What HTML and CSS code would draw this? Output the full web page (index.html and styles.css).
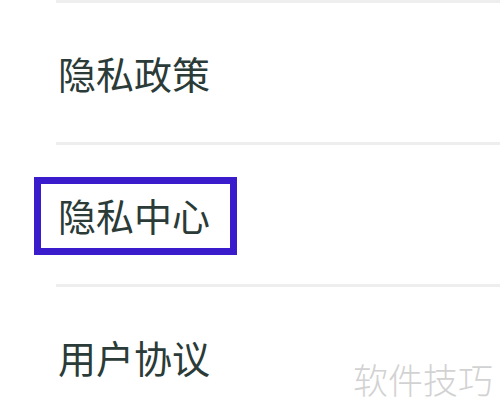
FILE: index.html
```html
<!DOCTYPE html>
<html lang="zh-CN">
<head>
<meta charset="utf-8">
<link rel="stylesheet" href="styles.css">
</head>
<body>
<div class="list">
  <div class="divider"></div>
  <div class="row"><span class="label">隐私政策</span></div>
  <div class="divider"></div>
  <div class="row"><span class="label boxed">隐私中心</span></div>
  <div class="divider"></div>
  <div class="row"><span class="label">用户协议</span></div>
</div>
<div class="watermark">软件技巧</div>
</body>
</html>
```
FILE: styles.css
```css
html, body {
  margin: 0;
  padding: 0;
  background: #ffffff;
  width: 500px;
  height: 420px;
  overflow: hidden;
  position: relative;
  font-family: "Noto Sans CJK SC", "Noto Sans", sans-serif;
}
.list {
  display: flex;
  flex-direction: column;
}
.divider {
  height: 3px;
  margin-left: 56px;
  background: #eeeeee;
}
.row {
  height: 139px;
  display: flex;
  align-items: center;
  padding-left: 58px;
}
.label {
  font-size: 38px;
  line-height: 1;
  color: #2a3b38;
}
.boxed {
  position: relative;
}
.boxed::after {
  content: "";
  position: absolute;
  top: -19px;
  bottom: -21px;
  left: -24px;
  right: -27px;
  border: 7px solid #3a1ccc;
}
.watermark {
  position: absolute;
  left: 353px;
  top: 358px;
  font-size: 35px;
  font-weight: 300;
  line-height: 1.2;
  color: #d2d2d2;
}
```
